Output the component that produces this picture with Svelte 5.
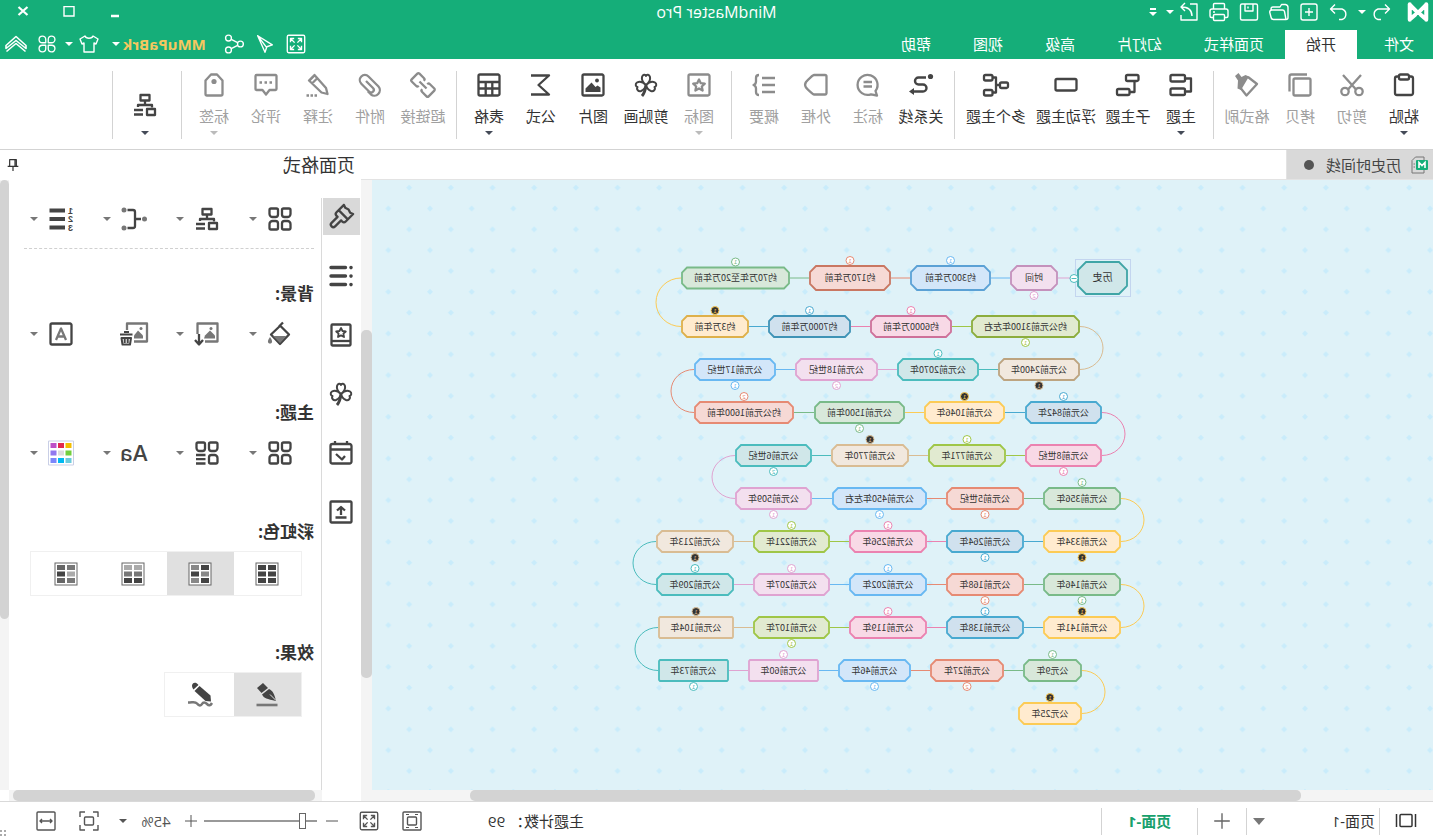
<script>
  const icons = {
    logo: '<path d="M3 3.500v17M21 3.500v17M3 4l9 9 9-9M3 20l6-5M21 20l-6-5" stroke-width="4.400" stroke-linecap="round"/>',
    undo: '<path d="M8 4.500L3.500 9l4.500 4.500M4 9h11a5.500 5.500 0 0 1 0 10.500h-3"/>',
    redo: '<path d="M16 4.500L20.500 9l-4.500 4.500M20 9H9a5.500 5.500 0 0 0 0 10.500h3"/>',
    plus: '<rect x="4" y="4" width="16" height="16" rx="2"/><path d="M12 8v8M8 12h8"/>',
    folder: '<path d="M5 19.500a2 2 0 0 1-2-2V7.500a3 3 0 0 1 2.500-3h4l1.500 2.500h7a2 2 0 0 1 2 2v1M5 19.500h12.500a2.500 2.500 0 0 0 2.400-2l1.300-5a2 2 0 0 0-2-2.500H8.500a2 2 0 0 0-2 1.500z"/>',
    save: '<rect x="3.500" y="4" width="17" height="16" rx="1.500"/><path d="M8 4v7h8V4M13 6.500v2"/>',
    print: '<path d="M6.500 9V4.500a1 1 0 0 1 1-1h9a1 1 0 0 1 1 1V9M6 17.500H4.500A1.500 1.500 0 0 1 3 16v-5a2 2 0 0 1 2-2h14a2 2 0 0 1 2 2v5a1.500 1.500 0 0 1-1.500 1.500H18"/><rect x="6.500" y="14.500" width="11" height="6" rx="1"/><path d="M16 12h2"/>',
    export: '<path d="M11 4H4v16h16v-5M9 16c0-6 3-9 11-9M16 3l4 4-4 4"/>',
    full: '<rect x="2.500" y="2.500" width="19" height="19" rx="1.500"/><path d="M10 6H6v4M6 6l4.500 4.500M14 6h4v4M18 6l-4.500 4.500M6 14v4h4M6 18l4.500-4.500M18 14v4h-4M18 18l-4.500-4.500"/>',
    send: '<path d="M20 3L4 13l6 2 2 6zM20 3l-9.500 12.500"/>',
    share: '<circle cx="5" cy="12" r="3.200"/><circle cx="18" cy="5.500" r="3.200"/><circle cx="18" cy="18.500" r="3.200"/><path d="M8 10.500l7-3.500M8 13.500l7 3.500"/>',
    shirt: '<path d="M8 4c1 3 7 3 8 0l5 3-2 5-2-1v9H7v-9l-2 1-2-5z"/>',
    petals: '<path d="M10.500 10.500H6.500a4 4 0 1 1 4-4zM13.500 10.500V6.500a4 4 0 1 1 4 4zM10.500 13.500V17.500a4 4 0 1 1-4-4zM13.500 13.500h4a4 4 0 1 1-4 4z"/>',
    up: '<path d="M2 13.500L12 4.500 22 13.500v3L12 8.500 2 16.500zM2.500 19.500L12 11.500l9.500 8" stroke-width="1.600"/>',
    paste: '<rect x="3" y="3.500" width="18" height="18.500" rx="2"/><rect x="7" y="1.500" width="10" height="5" rx="1.500" fill="#fff"/>',
    cut: '<path d="M3 2l13.500 15M21 2L7.500 17"/><circle cx="5" cy="18.500" r="3.700"/><circle cx="19" cy="18.500" r="3.700"/>',
    copy: '<rect x="1.500" y="5.500" width="17" height="17" rx="1.500"/><path d="M5 1.500h15.500a2 2 0 0 1 2 2v15"/>',
    painter: '<path d="M11 4L2 11l10.500 11.500L20 13"/><path d="M10 3.500l3.500-1.500 4 2 3-4 3.500 3-3 4.500.5 8-3.500 1.500z" fill="currentColor" stroke="none"/>',
    topic: '<rect x="8" y="2" width="14.500" height="6.500" rx="1.500"/><rect x="8" y="15.500" width="14.500" height="6.500" rx="1.500"/><path d="M8 5.500H2v13h6"/>',
    subtopic: '<rect x="1.500" y="2" width="12.500" height="6" rx="1.500"/><rect x="10.500" y="16" width="12.500" height="6" rx="1.500"/><path d="M5.500 8v11h5"/>',
    floating: '<rect x="1.500" y="6" width="21" height="11.500" rx="1.500"/>',
    multi: '<rect x="0" y="9.500" width="8" height="5.500" rx="1.500"/><rect x="15.500" y="2" width="8.500" height="5.500" rx="1.500"/><rect x="15.500" y="17" width="8.500" height="5.500" rx="1.500"/><path d="M8 12h4M15.500 4.500H12v15h3.500"/>',
    relation: '<circle cx="2.500" cy="3.500" r="2.600" fill="currentColor" stroke="none"/><path d="M7 4.500h7.500a3.500 3.500 0 0 1 0 7H10a3.500 3.500 0 0 0 0 7h9" stroke-width="2.400"/><path d="M24 18.500l-5-3.500v7z" fill="currentColor" stroke="none"/>',
    callout: '<path d="M3 22.500l1.500-4.500A10 10 0 1 1 9 21.300z"/><path d="M8 9h8.500M8 13.500h8.500"/>',
    outline: '<path d="M3 2h11c1 0 6 4.500 8 7 1 1.500 1 4 0 5.500-2 2.500-7 7-8 7H3c-1 0-1.500-.5-1.500-1.500V3.500C1.500 2.500 2 2 3 2z"/>',
    summary: '<path d="M1 5h13M1 12h13M1 19h13M17 2c2 0 3 1 3 3v3.500c0 2 1 3 2.500 3.500-1.500.5-2.500 1.500-2.500 3.500V19c0 2-1 3-3 3"/>',
    star: '<rect x="1.500" y="1.500" width="21" height="21" rx="1.500"/><path d="M12 6.500l1.800 3.700 4 .5-3 2.800.8 4-3.600-2-3.600 2 .8-4-3-2.800 4-.5z"/>',
    clover: '<path d="M12 12C8 9 7.500 6.500 8 4c.7-2.800 3.300-3 4-1 .7-2 3.300-1.800 4 1 .5 2.500 0 5-4 8zM12 12c-3.500-3.500-6.500-4-9-2.500-2 1.500-1.500 4 .5 4.500-1.500 2.500 1 4.800 3.500 4 2.500-1 4.500-3.500 5-6zM12 12c3.500-3.500 6.500-4 9-2.500 2 1.500 1.500 4-.5 4.500 1.500 2.500-1 4.800-3.500 4-2.500-1-4.500-3.500-5-6z" stroke-width="2"/><path d="M12 12c.5 5 1.500 8 4 11" stroke-width="2.800"/>',
    image: '<rect x="1.500" y="1.500" width="21" height="21" rx="1.500"/><path d="M4.500 19v-4.500l3-2 2 1.500 4-4.500 6 6V19z" fill="currentColor" stroke="none"/><circle cx="8" cy="7.500" r="1.900" fill="currentColor" stroke="none"/>',
    sigma: '<path d="M22 2.500H4L14.500 12 4 21.500h18"/>',
    table: '<rect x="1.500" y="1.500" width="21" height="21" rx="1.500"/><path d="M2 9h20M2 15.500h20M8.700 9v13M15.300 9v13"/>',
    link: '<g transform="rotate(-45 12 12)"><path d="M9.500 8.500V8A1.500 1.500 0 0 0 8 6.500H1.500A1.500 1.500 0 0 0 0 8v8a1.500 1.500 0 0 0 1.500 1.500H8A1.500 1.500 0 0 0 9.500 16v-.5M14.500 8.500V8A1.500 1.500 0 0 1 16 6.500h6.500A1.500 1.500 0 0 1 24 8v8a1.500 1.500 0 0 1-1.500 1.500H16a1.500 1.500 0 0 1-1.500-1.500v-.5M7 12h10"/></g>',
    clip: '<path d="M16 7L9 14a2.600 2.600 0 0 0 3.700 3.700l8-8a5 5 0 0 0-7.200-7.200L3.500 12.500a5.500 5.500 0 0 0 7.700 7.800l3-3" transform="translate(0 1)"/>',
    note: '<path d="M15.500 2l5.500 5.500L8.500 19.500l-6 1.500 1.500-6zM12.500 5l5.500 5.500M14.500 1.500l7 7"/><path d="M13 22.500h2.500M17 22.500h2.500M21 22.500h2.500"/>',
    comment: '<path d="M2.500 2h19c.6 0 1 .4 1 1v13c0 .6-.4 1-1 1h-6L12 21.500 8.500 17h-6c-.6 0-1-.4-1-1V3c0-.6.4-1 1-1z"/><path d="M6 9.500h2.500M11 9.500h2.500M16 9.500h2.500" stroke-width="2.500"/>',
    tag: '<path d="M9 1.500h6l5.500 6V21c0 1-.5 1.500-1.500 1.500H5c-1 0-1.500-.5-1.500-1.500V7.500z"/><circle cx="12" cy="8.500" r="2.600" fill="currentColor" stroke="none"/>',
    layout: '<rect x="7.500" y="2" width="9" height="5.500"/><path d="M12 7.500V12M5 14.500V12h14v2M14 17h9M14 21.500h9"/><rect x="2" y="16" width="8" height="6"/>',
    grid: '<path d="M3 1.500h5.500c1 0 1.500.5 1.500 1.500v4.500c0 1.500-1 2.500-2.500 2.500H4.500C3 10 1.500 8.500 1.500 7V3c0-1 .5-1.500 1.500-1.500zM15.500 1.500H21c1 0 1.500.5 1.500 1.500v4c0 1.500-1.500 3-3 3h-3C15 10 14 9 14 7.500V3c0-1 .5-1.500 1.500-1.500zM4.500 14h3c1.500 0 2.500 1 2.500 2.500V21c0 1-.5 1.500-1.500 1.500H3c-1 0-1.500-.5-1.500-1.500v-4c0-1.500 1.500-3 3-3zM16.500 14h3c1.500 0 3 1.500 3 3v4c0 1-.5 1.500-1.500 1.500h-5.500c-1 0-1.500-.5-1.500-1.500v-4.500c0-1.500 1-2.500 2.500-2.500z"/>',
    gridlines: '<path d="M3 1.500h5.500c1 0 1.500.5 1.500 1.500v4.500C10 9 9 10 7.500 10H4.500C3 10 1.500 8.500 1.500 7V3c0-1 .5-1.500 1.500-1.500zM15.500 1.500H21c1 0 1.500.5 1.500 1.500v4c0 1.500-1.500 3-3 3h-3C15 10 14 9 14 7.500V3c0-1 .5-1.500 1.500-1.500zM4.500 14h3c1.500 0 2.500 1 2.500 2.500V21c0 1-.5 1.500-1.500 1.500H3c-1 0-1.500-.5-1.500-1.500v-4c0-1.500 1.500-3 3-3zM13.500 14H23M13.500 18.200H23M13.500 22.500H23"/>',
    branch: '<circle cx="1.500" cy="12" r="2.500" fill="#777" stroke="none"/><circle cx="22" cy="3" r="2.500" fill="#777" stroke="none"/><circle cx="22" cy="21" r="2.500" fill="#777" stroke="none"/><path d="M5 12h6M18.500 3H13c-1.500 0-2 .5-2 2v14c0 1.500.5 2 2 2h5.500"/>',
    numbers: '<path d="M8 3.500h15.500M8 12h15.500M8 20.500h15.500" stroke-width="3.800"/><g fill="currentColor" stroke="none" font-family="Liberation Sans, sans-serif" font-weight="700" font-size="9"><text x="0" y="6.500">1</text><text x="0" y="15">2</text><text x="0" y="23.500">3</text></g>',
    bucket: '<path d="M11 3L21 12.500 12 22 3 12.500 12.500 3M9 0.500l4 4"/><path d="M5.500 14h13.500L12 21z" fill="#777" stroke="none"/><path d="M22 15c3 4 2.500 6.500 0 6.500S19 19 22 15z" fill="#777" stroke="none"/>',
    imagedown: '<path d="M14 19.500H1.500v-18h20V12" stroke="#777"/><path d="M4 16.500v-3l5-5 5 5 1 3z" fill="#777" stroke="none"/><circle cx="8" cy="6.500" r="1.500" fill="#777" stroke="none"/><path d="M20 12v9.500M16 18l4 4.500 4-4.500"/>',
    imagedel: '<path d="M12 19.500H-1v-18h20V8" stroke="#777"/><path d="M3 16.500v-3l5-5 4 5v3z" fill="#777" stroke="none"/><circle cx="5" cy="6.500" r="1.500" fill="#777" stroke="none"/><path d="M13.500 12.500H26M17 10h5M15 16h9.500l-1 6.500h-7.500zM18.300 16v5M21.300 16v5" stroke-width="2"/>',
    lettera: '<rect x="1.500" y="1.500" width="21" height="21" rx="1.500"/><path d="M7 18l5-11.500L17 18M8.500 14.500h7" stroke="#777"/>',
    palette: '<rect x="-.5" y="0" width="25" height="24" fill="#fff" stroke="#c9cfe6" stroke-width="1"/><g stroke="none"><rect x="1.500" y="2" width="6" height="5" fill="#f3bd00"/><rect x="9" y="2" width="6" height="5" fill="#e1284e"/><rect x="16.500" y="2" width="6" height="5" fill="#bd4fc7"/><rect x="1.500" y="9.500" width="6" height="5" fill="#72cf3d"/><rect x="9" y="9.500" width="6" height="5" fill="#dcdcdc"/><rect x="16.500" y="9.500" width="6" height="5" fill="#9177ef"/><rect x="1.500" y="17" width="6" height="5" fill="#6bcbdc"/><rect x="9" y="17" width="6" height="5" fill="#00b9f1"/><rect x="16.500" y="17" width="6" height="5" fill="#7b86fb"/></g>',
    brush: '<g transform="translate(2 2) rotate(-45 12 12)"><path d="M5.500 9V-1.500l3 1.200 3.500-1.200 3.500 1.200 3-1.200V9c0 1.500-1 2.500-2.500 2.500h-1.500V20a2.500 2.500 0 0 1-5 0v-8.500H8A2.500 2.500 0 0 1 5.500 9zM5.500 6h13"/></g>',
    list: '<path d="M7.500 3.500H22M7.500 12H22M7.500 20.500H22" stroke-width="3.400" stroke-linecap="round"/><path d="M2 3.500v.1M2 12v.1M2 20.500v.1" stroke-width="3.600" stroke-linecap="round"/>',
    starbook: '<rect x="2.500" y="1.500" width="19" height="21" rx="1"/><path d="M3 18h18"/><path d="M12 5l1.500 3 3.300.5-2.400 2.200.6 3.300-3-1.600L9 14l.6-3.300-2.400-2.200 3.300-.5z" stroke-width="1.800"/>',
    calendar: '<rect x="1.500" y="3" width="21" height="19.500" rx="2"/><path d="M2 8.500h20M6 0v4M18 0v4"/><path d="M17 13l-6 5.500L8 15"/>',
    upload: '<rect x="1.500" y="1.500" width="21" height="21" rx="1"/><path d="M12 15V8M8 10.500L12 7l4 3.500M6.500 17.500h11"/>',
    pin: '<path d="M7 4h10v10H7zM9 4v10M4 14h16M12 14v7" stroke-width="1.800"/>',
    pen: '<path d="M11 5l5-5 6 5-4.500 5z" fill="currentColor" stroke="none"/><path d="M10 6l7 5.500c-2 4-5 4.500-14 6.500C4.500 11 6 8 10 6z" fill="currentColor" stroke="none"/><path d="M3 17.500l6-6" stroke="#e0e0e0" stroke-width="1"/><path d="M1.500 22h21" stroke="#777" stroke-width="2.600"/>',
    pencil: '<path d="M12.500 3l5 5L6.500 18l-5.500.5.500-6z" fill="currentColor" stroke="none"/><path d="M13.500 2c4-5 9-.5 5 4.500z" fill="currentColor" stroke="none"/><path d="M0 20c1.500 2.500 3 3 5 1s4-2 5 0 3 2 5-.5 4-1 9-1" stroke="#777" stroke-width="2.500"/>',
    pages: '<rect x="6" y="5.500" width="12" height="12" rx="1"/><path d="M2.500 5v13M21.500 5v13"/>',
    fitpage: '<rect x="3" y="3" width="18" height="18" rx="1"/><rect x="7.500" y="8" width="9" height="8" rx="1"/><path d="M9 5.500H6M15 5.500h3M9 18.500H6M15 18.500h3" stroke-width="1.200"/>',
    focus: '<path d="M8 3H3v5M16 3h5v5M8 21H3v-5M16 21h5v-5"/><rect x="7.500" y="8" width="9" height="8" rx="1"/>',
    fitwidth: '<rect x="3" y="3" width="18" height="18" rx="1"/><path d="M6 12h12M8 10l-2 2 2 2M16 10l2 2-2 2"/>',
    add: '<path d="M12 3.500v17M3.500 12h17"/>',
    minus: '<path d="M6 12h12"/>',
    smallplus: '<path d="M12 6v12M6 12h12"/>'
  };

  const quick = [['undo', '撤销'], ['caret', '更多撤销'], ['redo', '恢复'], ['plus', '新建'], ['folder', '打开'], ['save', '保存'], ['print', '打印'], ['export', '导出'], ['caret', '更多导出']];
  const tabs = ['文件', '开始', '页面样式', '幻灯片', '高级', '视图', '帮助'];

  const ribbon = [
    [['paste', '粘贴', 1, 1], ['cut', '剪切'], ['copy', '拷贝'], ['painter', '格式刷']],
    [['topic', '主题', 1, 1], ['subtopic', '子主题', 1], ['floating', '浮动主题', 1], ['multi', '多个主题', 1]],
    [['relation', '关系线', 1], ['callout', '标注'], ['outline', '外框'], ['summary', '概要']],
    [['star', '图标', 0, 1], ['clover', '剪贴画', 1], ['image', '图片', 1], ['sigma', '公式', 1], ['table', '表格', 1, 1]],
    [['link', '超链接'], ['clip', '附件'], ['note', '注释'], ['comment', '评论'], ['tag', '标签', 0, 1]]
  ];

  // line colour, deep border colour, fill
  const palette = {
    teal: ['#4bbcbd', '#3fa5a6', '#d0e7e9'],
    orchid: ['#dfa3d1', '#c491bc', '#f3e0ef'],
    sky: ['#68b8f2', '#5ba1d5', '#d3e6f9'],
    coral: ['#e68a73', '#c97762', '#f6d9d5'],
    green: ['#79ba88', '#79ba88', '#d8e8da'],
    yellow: ['#fccb55', '#deb04a', '#ffebcf'],
    blue: ['#48a9d0', '#3f93b6', '#d0e1ee'],
    pink: ['#eb82b0', '#ce719a', '#f8d9e6'],
    lime: ['#9fc647', '#8cad3d', '#e1ead0'],
    tan: ['#d9bc93', '#bda480', '#f1e8de']
  };

  // label, left, width, row, colour, badge ("1" or "2", "!" is the dark one), badge side
  const nodes = [
    ['历史', 305, 51, 0, 'teal'],
    ['时间', 375, 48, 0, 'orchid', '2', 1],
    ['约300万年前', 442, 81, 0, 'sky', '1', -1],
    ['约170万年前', 542, 82, 0, 'coral', '1', -1],
    ['约70万年至20万年前', 643, 109, 0, 'green', '1', -1],
    ['约3万年前', 684, 68, 1, 'yellow', '!', -1],
    ['约7000万年前', 582, 83, 1, 'blue', '1', -1],
    ['约6000万年前', 481, 82, 1, 'pink', '1', -1],
    ['约公元前3100年左右', 353, 109, 1, 'lime', '1', 1],
    ['公元前2400年', 353, 82, 2, 'tan', '!', 1],
    ['公元前2070年', 454, 82, 2, 'teal', '1', -1],
    ['公元前18世纪', 555, 83, 2, 'orchid', '2', 1],
    ['公元前17世纪', 657, 82, 2, 'sky', '1', 1],
    ['约公元前1600年前', 639, 100, 3, 'coral', '2', -1],
    ['公元前1500年前', 528, 91, 3, 'green', '1', 1],
    ['公元前1046年', 428, 81, 3, 'yellow', '!', -1],
    ['公元前842年', 331, 77, 3, 'blue', '1', -1],
    ['公元前8世纪', 331, 77, 4, 'pink', '1', 1],
    ['公元前771年', 427, 78, 4, 'lime', '1', -1],
    ['公元前770年', 524, 78, 4, 'tan', '!', -1],
    ['公元前6世纪', 621, 77, 4, 'teal', '2', 1],
    ['公元前509年', 621, 77, 5, 'orchid', '1', 1],
    ['公元前450年左右', 506, 95, 5, 'sky', '1', 1],
    ['公元前5世纪', 409, 78, 5, 'coral', '1', 1],
    ['公元前356年', 312, 78, 5, 'green', '1', -1],
    ['公元前334年', 312, 78, 6, 'yellow', '!', 1],
    ['公元前264年', 409, 78, 6, 'blue', '1', 1],
    ['公元前256年', 506, 78, 6, 'pink', '1', -1],
    ['公元前221年', 603, 77, 6, 'lime', '1', -1],
    ['公元前213年', 699, 78, 6, 'tan', '!', 1],
    ['公元前209年', 699, 78, 7, 'teal', '1', -1],
    ['公元前207年', 603, 77, 7, 'orchid', '1', -1],
    ['公元前202年', 506, 78, 7, 'sky', '1', -1],
    ['公元前168年', 409, 78, 7, 'coral', '1', 1],
    ['公元前146年', 312, 78, 7, 'green', '1', 1],
    ['公元前141年', 312, 78, 8, 'yellow', '!', -1],
    ['公元前138年', 409, 78, 8, 'blue', '1', -1],
    ['公元前119年', 506, 78, 8, 'pink', '1', -1],
    ['公元前107年', 603, 77, 8, 'lime', '1', 1],
    ['公元前104年', 699, 76, 8, 'tan', '!', -1],
    ['公元前73年', 704, 71, 9, 'teal', '1', 1],
    ['公元前60年', 614, 71, 9, 'orchid', '1', -1],
    ['公元前46年', 522, 73, 9, 'sky', '1', 1],
    ['公元前27年', 429, 74, 9, 'coral', '2', 1],
    ['公元9年', 351, 59, 9, 'green', '1', -1],
    ['公元25年', 351, 64, 10, 'yellow', '!', -1]
  ].map(([label, x, w, row, color, badge, side], i) => {
    const [line, deep, fill] = palette[color];
    const h = i === 0 ? 32 : i < 4 ? 24 : 21;
    return {
      label, x, w, row, h, line, fill, badge, side,
      stroke: i < 10 ? deep : line,
      cut: i === 0 ? 8 : i < 4 ? 6 : label === '公元前104年' || label === '公元前73年' || label === '公元前60年' ? 1 : 5,
      cy: row === 0 ? 98 : 103 + row * 43 + 0.5,
      size: i === 0 ? 10 : 9
    };
  });

  function outlinePath({ x, w, h, cy, cut: c }) {
    const l = x + 1, r = x + w - 1, t = cy - h / 2, b = cy + h / 2;
    return `M${l + c} ${t}H${r - c}L${r} ${t + c}V${b - c}L${r - c} ${b}H${l + c}L${l} ${b - c}V${t + c}Z`;
  }

  const links = nodes.slice(1).map((b, i) => {
    const a = nodes[i];
    if (a.row === b.row) {
      const forward = a.x < b.x;
      return { color: b.line, d: `M${forward ? a.x + a.w : a.x} ${b.cy}H${forward ? b.x : b.x + b.w}` };
    }
    const right = a.row % 2 === 0;
    const x1 = right ? a.x + a.w : a.x;
    const x2 = right ? b.x + b.w : b.x;
    return { color: b.line, d: `M${x1} ${a.cy}A${a.row ? 23 : 25} ${(b.cy - a.cy) / 2} 0 0 ${right ? 1 : 0} ${x2} ${b.cy}` };
  });

  const sections = [
    { title: '', tools: [['grid', '布局样式', 1], ['layout', '布局', 1], ['branch', '连接线', 1], ['numbers', '编号', 1]] },
    { title: '背景:', tools: [['bucket', '背景颜色', 1], ['imagedown', '背景图片', 1], ['imagedel', '移除图片', 0], ['lettera', '水印', 1]] },
    { title: '主题:', tools: [['grid', '主题样式', 1], ['gridlines', '主题布局', 1], ['aa', '主题字体', 1], ['palette', '主题颜色', 1]] }
  ];

  const rainbow = [
    ['#444', '#444', '#444', '#444', '#444', '#444'],
    ['#444', '#888', '#888', '#444', '#444', '#888'],
    ['#aaa', '#aaa', '#777', '#777', '#444', '#444'],
    ['#777', '#666', '#aaa', '#444', '#777', '#666']
  ];

  const side = [['brush', '页面格式'], ['list', '大纲'], ['starbook', '图标'], ['clover', '剪贴画'], ['calendar', '任务'], ['upload', '导出']];

  let activeTab = $state('开始');
  let activeSide = $state('brush');
  let rainbowMode = $state(1);
  let effect = $state('pen');
  let zoom = $state(10);
</script>

{#snippet icon(name, size = 24, stroke = 2.3)}
  <svg class="icon" width={size} height={size} viewBox="0 0 24 24" fill="none" stroke="currentColor" stroke-width={stroke} stroke-linejoin="round" aria-hidden="true">{@html icons[name]}</svg>
{/snippet}

<div class="app">
  <header>
    <div class="titlebar">
      <div class="quick">
        <span class="logo">{@render icon('logo', 22)}</span>
        {#each quick as [name, label]}
          {#if name === 'caret'}
            <button class="dropdown" aria-label={label}><i class="caret"></i></button>
          {:else}
            <button class="quickbutton" aria-label={label}>{@render icon(name, 24, 1.4)}</button>
          {/if}
        {/each}
        <button class="dropdown custom" aria-label="自定义"><i class="dash"></i><i class="caret"></i></button>
      </div>
      <h1>MindMaster Pro</h1>
      <div class="window">
        <button aria-label="最小化"><svg width="12" height="12"><path d="M2 10h8" stroke="#fff" stroke-width="2.500" /></svg></button>
        <button aria-label="最大化"><svg width="12" height="12"><path d="M1 .500h10v9.500H1z" fill="none" stroke="#fff" stroke-width="1.400" /></svg></button>
        <button aria-label="关闭"><svg width="12" height="12"><path d="M1.500 1l9 8M10.500 1l-9 8" stroke="#fff" stroke-width="2.200" /></svg></button>
      </div>
    </div>
    <div class="menubar">
      <nav>
        {#each tabs as tab}
          <button class:active={activeTab === tab} onclick={() => (activeTab = tab)}>{tab}</button>
        {/each}
      </nav>
      <div class="account">
        <button aria-label="全屏">{@render icon('full', 22, 1.5)}</button>
        <button aria-label="发送">{@render icon('send', 22, 1.5)}</button>
        <button aria-label="分享">{@render icon('share', 22, 1.5)}</button>
        <button class="user">MMuPaBrk<i class="caret"></i></button>
        <button class="skin" aria-label="皮肤">{@render icon('shirt', 24, 1.4)}<i class="caret"></i></button>
        <button aria-label="应用">{@render icon('petals', 20, 1.6)}</button>
        <button class="collapse" aria-label="收起">{@render icon('up', 24)}</button>
      </div>
    </div>
  </header>

  <section class="ribbon">
    {#each ribbon as group}
      <div class="group">
        {#each group as [name, label, on, menu]}
          <button class="tool" class:three={label.length === 3} class:four={label.length === 4} class:off={!on}>
            {@render icon(name)}
            <span>{label}</span>
            {#if menu}<i class="caret"></i>{/if}
          </button>
        {/each}
      </div>
    {/each}
    <div class="group last">
      <button class="tool" aria-label="布局">{@render icon('layout')}<i class="caret"></i></button>
    </div>
  </section>

  <main>
    <div class="document">
      <div class="doctabs">
        <button class="doctab">
          <svg width="18" height="18" viewBox="0 0 18 18" fill="none" aria-hidden="true">
            <path d="M5 4V1h8.500L17 4.500V17H5v-3" stroke="#777" />
            <rect x="1" y="4" width="12" height="10" rx="1" fill="#15ae79" />
            <path d="M4 12V6.500l3 3 3-3V12" stroke="#fff" stroke-width="1.600" />
            <path d="M14 8h1.500M14 11h1.500" stroke="#777" />
          </svg>
          <span>历史时间线</span>
          <i class="unsaved"></i>
        </button>
      </div>
      <div class="canvasrow">
        <div class="canvas">
          <svg width="100%" height="100%" font-family="'Noto Sans CJK SC', sans-serif">
            <defs>
              <pattern id="diamonds" width="41.667" height="41.667" patternUnits="userSpaceOnUse">
                <path d="M3 25.500l3 3-3 3-3-3zM23.800 4.700l3 3-3 3-3-3z" fill="#c9ecfb" />
              </pattern>
            </defs>
            <rect width="100%" height="100%" fill="url(#diamonds)" />
            {#each links as link}
              <path d={link.d} fill="none" stroke={link.color} stroke-width="1" />
            {/each}
            <rect x="302.500" y="79.500" width="55" height="37" fill="none" stroke="#c3d5ef" />
            {#each nodes as node}
              <path d={outlinePath(node)} fill={node.fill} stroke={node.stroke} stroke-width="1.800" />
              <text x={node.x + node.w / 2} y={node.cy + 3} font-size={node.size} fill="#333" text-anchor="middle">{node.label}</text>
              {#if node.badge}
                {@const bx = node.x + node.w / 2}
                {@const by = node.cy + node.side * (node.h / 2 + 5.5)}
                <circle cx={bx} cy={by} r="4" fill={node.badge === '!' ? '#333' : '#fff'} stroke={node.line} />
                <text x={bx} y={by + 2} font-size="6" font-family="Liberation Sans, sans-serif" fill={node.line} text-anchor="middle">{node.badge === '!' ? '1' : node.badge}</text>
              {/if}
            {/each}
            <circle cx="359" cy="98.500" r="4" fill="#fff" stroke="#4bbcbd" />
            <path d="M356.500 98.500h5" stroke="#4bbcbd" />
          </svg>
        </div>
        <div class="vtrack"><div class="thumb canvasv"></div></div>
      </div>
      <div class="htrack"><div class="thumb canvash"></div></div>
    </div>

    <aside>
      <div class="panelhead">
        <h2>页面格式</h2>
        <button aria-label="固定">{@render icon('pin', 16)}</button>
      </div>
      <div class="panelbody">
        <div class="sidebar">
          {#each side as [name, label]}
            <button aria-label={label} class:active={activeSide === name} onclick={() => (activeSide = name)}>{@render icon(name)}</button>
          {/each}
        </div>
        <div class="options">
          <div class="optionlist">
            {#each sections as section}
              <div class="section" class:first={!section.title}>
                {#if section.title}<h3>{section.title}</h3>{/if}
                <div class="tools">
                  {#each section.tools as [name, label, menu]}
                    <button aria-label={label}>
                      <span class="glyph">
                        {#if name === 'aa'}<span class="aa">Aa</span>{:else}{@render icon(name)}{/if}
                      </span>
                      {#if menu}<i class="caret"></i>{/if}
                    </button>
                  {/each}
                </div>
              </div>
            {/each}
            <div class="section colors">
              <h3>彩虹色:</h3>
              <div class="segments">
                {#each rainbow as cells, i}
                  <button aria-label={'彩虹色 ' + (i + 1)} class:active={rainbowMode === i} onclick={() => (rainbowMode = i)}>
                    <svg width="24" height="24" viewBox="0 0 24 24" fill="none">
                      <rect x="1" y="1" width="22" height="22" stroke="#666" fill="#fff" />
                      {#each cells as fill, c}
                        <rect x={c % 2 ? 13 : 3} y={3 + Math.floor(c / 2) * 6.5} width="8" height="5" {fill} />
                      {/each}
                    </svg>
                  </button>
                {/each}
              </div>
            </div>
            <div class="section">
              <h3>效果:</h3>
              <div class="segments">
                <button aria-label="标准" class:active={effect === 'pen'} onclick={() => (effect = 'pen')}>{@render icon('pen')}</button>
                <button aria-label="手绘" class:active={effect === 'pencil'} onclick={() => (effect = 'pencil')}>{@render icon('pencil')}</button>
              </div>
            </div>
          </div>
          <div class="htrack"><div class="thumb panelh"></div></div>
        </div>
        <div class="vtrack narrow"><div class="thumb panelv"></div></div>
      </div>
    </aside>
  </main>

  <footer>
    <button class="pagesbutton" aria-label="页面列表">{@render icon('pages', 24, 1.5)}</button>
    <label class="pageselect">
      <select aria-label="页面"><option>页面-1</option></select>
      <i class="caret big"></i>
    </label>
    <button class="addpage" aria-label="新建页面">{@render icon('add', 22, 1.5)}</button>
    <button class="page">页面-1</button>
    <span class="count">主题计数： 99</span>
    <div class="zoom">
      <button aria-label="适应页面">{@render icon('fitpage', 24, 1.4)}</button>
      <button aria-label="全屏">{@render icon('full', 22, 1.5)}</button>
      <button class="step" aria-label="缩小">{@render icon('minus', 24, 1)}</button>
      <input type="range" aria-label="缩放" min="0" max="100" bind:value={zoom} />
      <button class="step" aria-label="放大">{@render icon('smallplus', 24, 1)}</button>
      <button class="percent">45%<i class="caret"></i></button>
      <button aria-label="聚焦">{@render icon('focus', 24, 1.4)}</button>
      <button aria-label="适应宽度">{@render icon('fitwidth', 24, 1.4)}</button>
    </div>
    <i class="grip"></i>
  </footer>
</div>

<style>
  :global(body) { margin: 0; overflow: hidden; }

  .app {
    display: flex;
    flex-direction: column;
    height: 100vh;
    transform: scaleX(-1);
    font: 15px/20px 'Open Sans', 'Noto Sans CJK SC', sans-serif;
    color: #333;
    background: #fff;
  }

  button {
    display: flex;
    align-items: center;
    justify-content: center;
    flex: none;
    padding: 0;
    border: 0;
    background: none;
    color: inherit;
    font: inherit;
  }
  h1, h2, h3 { margin: 0; font: inherit; }
  .icon { display: block; overflow: visible; flex: none; }

  .caret {
    flex: none;
    width: 0;
    height: 0;
    border: 4px solid transparent;
    border-top-color: currentColor;
    border-bottom: 0;
  }

  header { background: #15ae79; color: #fff; }
  .titlebar {
    display: grid;
    grid-template-columns: 1fr auto 1fr;
    height: 24px;
  }
  h1 { font-size: 16px; line-height: 24px; }
  .quick { display: flex; align-items: center; padding-left: 4px; }
  .logo { margin-right: 11px; }
  .quickbutton { width: 30px; }
  .dropdown { width: 12px; padding-right: 4px; }
  .dropdown.custom { flex-direction: column; gap: 2px; width: 22px; }
  .dash { width: 6px; height: 2px; background: #fff; }
  .window { display: flex; justify-content: flex-end; }
  .window button { width: 46px; }

  .menubar {
    display: flex;
    justify-content: space-between;
    height: 29px;
    padding-top: 6px;
  }
  nav { display: flex; }
  nav button { padding: 0 21px 2px; }
  nav button:first-child { padding: 0 27px 2px 19px; }
  nav button.active { background: #fff; color: #333; }
  .account { display: flex; align-items: center; padding: 0 1px 2px 0; }
  .account button { width: 31px; }
  .account .user { width: auto; margin: 0 6px 0 13px; gap: 3px; color: #f6c75f; font-weight: 700; }
  .account .user .caret { color: #fff; }
  .account .skin { width: 46px; gap: 4px; margin-right: -3px; }

  .ribbon {
    display: flex;
    height: 90px;
    padding-left: 3px;
    border-bottom: 1px solid #d3d3d3;
  }
  .group { display: flex; }
  .group::after {
    content: '';
    width: 1px;
    height: 68px;
    margin: 12px 6px 0;
    background: #d3d3d3;
  }
  .tool {
    flex-direction: column;
    justify-content: flex-start;
    width: 52px;
    padding-top: 14px;
    color: #444;
  }
  .tool span { margin-top: 9px; white-space: nowrap; color: #333; }
  .tool .caret { margin-top: 5px; color: #454b58; }
  .tool.three { width: 54px; }
  .tool.four { width: 70px; }
  .tool.off { color: #8c8c8c; }
  .tool.off span { color: #a0a0a0; }
  .tool.off .caret { color: #bbb; }
  .last .tool { width: 56px; padding: 34px 0 0 4px; }
  .last .tool .caret { margin-top: 14px; }

  main { display: flex; flex: 1; min-height: 0; }
  .document { display: flex; flex-direction: column; flex: 1; min-width: 0; }
  .doctabs { height: 29px; border-bottom: 1px solid #e3e3e3; }
  .doctab {
    justify-content: flex-start;
    width: 147px;
    height: 29px;
    gap: 10px;
    padding-left: 4px;
    background: #d9d9d9;
    border-right: 1px solid #e3e3e3;
    color: #444;
  }
  .unsaved { width: 10px; height: 10px; margin-left: 2px; border-radius: 50%; background: #555; }
  .canvasrow { display: flex; flex: 1; min-height: 0; }
  .canvas { flex: 1; min-width: 0; background: #dff2f8; }
  .canvas svg { display: block; }

  .vtrack { width: 11px; background: #f4f4f4; }
  .vtrack.narrow { width: 9px; margin-bottom: 11px; }
  .htrack { height: 11px; background: #f4f4f4; }
  .thumb { border-radius: 5px; background: #d3d3d3; }
  .canvasv { height: 57%; margin-top: 150px; }
  .canvash { height: 11px; margin: 0 109px 0 132px; }
  .panelv { height: 72%; }
  .panelh { height: 11px; margin: 0 4px 0 7px; }

  aside { display: flex; flex-direction: column; width: 361px; }
  .panelhead {
    display: flex;
    align-items: center;
    justify-content: space-between;
    height: 30px;
    padding: 0 5px 0 6px;
  }
  h2 { font-size: 18px; line-height: 30px; }
  .panelbody { display: flex; flex: 1; min-height: 0; }
  .sidebar {
    display: flex;
    flex-direction: column;
    gap: 22px;
    width: 39px;
    margin-top: 18px;
    padding-left: 1px;
    box-sizing: border-box;
  }
  .sidebar button { width: 37px; height: 37px; color: #444; }
  .sidebar button.active { background: #d9d9d9; }
  .options { display: flex; flex-direction: column; flex: 1; min-width: 0; }
  .optionlist { flex: 1; margin-top: 18px; border-left: 1px solid #dadada; padding: 0 15px 0 7px; }
  .section { height: 119px; }
  .section.first { height: 85px; }
  .section.colors { height: 121px; }
  .first .tools { height: 50px; border-bottom: 1px dashed #d0d0d0; padding: 0; }
  h3 { font-size: 17px; line-height: 22px; font-weight: 700; color: #333; }
  .tools { display: flex; align-items: center; height: 58px; }
  .first .tools button { margin-top: -8px; }
  .tools button { width: 73px; justify-content: flex-start; padding-left: 22px; color: #444; }
  .tools .caret { margin-left: 11px; color: #777; }
  .glyph { display: flex; justify-content: center; width: 24px; }
  .aa { font: 500 22px/24px Inter, sans-serif; }
  .segments { display: inline-flex; margin: 8px 0 0 12px; padding: 0 2px 0 0; border: 1px solid #f0f0f0; }
  .segments button { width: 67px; height: 43px; color: #444; }
  .segments button.active { background: #e0e0e0; }

  footer {
    display: flex;
    align-items: center;
    box-sizing: border-box;
    height: 35px;
    padding-top: 4px;
    border-top: 1px solid #d9d9d9;
    position: relative;
  }
  footer > button, .pageselect { height: 27px; border-right: 1px solid #d3d3d3; }
  .pagesbutton { width: 54px; }
  .pageselect { display: flex; align-items: center; width: 132px; }
  select {
    flex: 1;
    appearance: none;
    border: 0;
    padding: 0 0 0 4px;
    background: none;
    color: #333;
    font: inherit;
  }
  .caret.big { border-width: 7px 6px 0; margin-right: 6px; color: #777; }
  .addpage { width: 49px; color: #666; }
  .page { width: 96px; color: #18a06c; font-weight: 700; }
  .count { flex: 1; text-align: right; padding-right: 54px; }
  .zoom { display: flex; align-items: center; padding-right: 25px; color: #555; }
  .zoom button { width: 43px; }
  .zoom .step { width: 31px; }
  .zoom .percent { width: 68px; gap: 14px; margin-left: -3px; }
  input {
    appearance: none;
    width: 113px;
    height: 18px;
    margin: 0 -3px 0 0;
    background: linear-gradient(#999, #999) center / 100% 2px no-repeat;
  }
  input::-webkit-slider-thumb {
    appearance: none;
    width: 7px;
    height: 16px;
    border: 1px solid #666;
    background: #fff;
  }
  .grip {
    position: absolute;
    right: 0;
    bottom: 0;
    width: 6px;
    height: 6px;
    background: radial-gradient(circle at 1px 1px, #aaa 1px, transparent 1px) 0 0 / 4px 4px;
  }
</style>
